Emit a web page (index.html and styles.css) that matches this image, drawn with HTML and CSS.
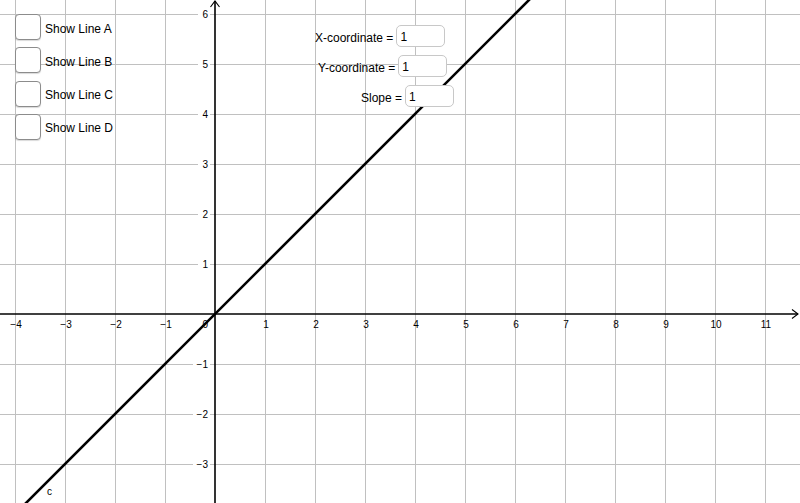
FILE: index.html
```html
<!DOCTYPE html>
<html>
<head>
<meta charset="utf-8">
<link rel="stylesheet" href="styles.css">
</head>
<body>
<div class="canvas">
  <svg class="graph" width="800" height="503" viewBox="0 0 800 503" xmlns="http://www.w3.org/2000/svg">
    <g class="grid">
      <line x1="15.5" y1="0" x2="15.5" y2="503"/>
      <line x1="65.5" y1="0" x2="65.5" y2="503"/>
      <line x1="115.5" y1="0" x2="115.5" y2="503"/>
      <line x1="165.5" y1="0" x2="165.5" y2="503"/>
      <line x1="265.5" y1="0" x2="265.5" y2="503"/>
      <line x1="315.5" y1="0" x2="315.5" y2="503"/>
      <line x1="365.5" y1="0" x2="365.5" y2="503"/>
      <line x1="415.5" y1="0" x2="415.5" y2="503"/>
      <line x1="465.5" y1="0" x2="465.5" y2="503"/>
      <line x1="515.5" y1="0" x2="515.5" y2="503"/>
      <line x1="565.5" y1="0" x2="565.5" y2="503"/>
      <line x1="615.5" y1="0" x2="615.5" y2="503"/>
      <line x1="665.5" y1="0" x2="665.5" y2="503"/>
      <line x1="715.5" y1="0" x2="715.5" y2="503"/>
      <line x1="765.5" y1="0" x2="765.5" y2="503"/>
      <line x1="0" y1="14.5" x2="800" y2="14.5"/>
      <line x1="0" y1="64.5" x2="800" y2="64.5"/>
      <line x1="0" y1="114.5" x2="800" y2="114.5"/>
      <line x1="0" y1="164.5" x2="800" y2="164.5"/>
      <line x1="0" y1="214.5" x2="800" y2="214.5"/>
      <line x1="0" y1="264.5" x2="800" y2="264.5"/>
      <line x1="0" y1="364.5" x2="800" y2="364.5"/>
      <line x1="0" y1="414.5" x2="800" y2="414.5"/>
      <line x1="0" y1="464.5" x2="800" y2="464.5"/>
    </g>
    <g class="labelbg">
      <rect x="198" y="8" width="12" height="13"/>
      <rect x="198" y="58" width="12" height="13"/>
      <rect x="198" y="108" width="12" height="13"/>
      <rect x="198" y="158" width="12" height="13"/>
      <rect x="198" y="208" width="12" height="13"/>
      <rect x="198" y="258" width="12" height="13"/>
      <rect x="193" y="358" width="17" height="13"/>
      <rect x="193" y="408" width="17" height="13"/>
      <rect x="193" y="458" width="17" height="13"/>
    </g>
    <g class="axes">
      <line x1="0" y1="314" x2="798" y2="314"/>
      <line x1="215" y1="1" x2="215" y2="503"/>
      <polyline points="792,309.5 798,314 792,318.5"/>
      <polyline points="210.5,7 215,1 219.5,7"/>
    </g>
    <line class="fn" x1="-4" y1="533" x2="537" y2="-8"/>
    <g class="ticks xt">
      <text x="16" y="328">−4</text>
      <text x="66" y="328">−3</text>
      <text x="116" y="328">−2</text>
      <text x="166" y="328">−1</text>
      <text x="266" y="328">1</text>
      <text x="316" y="328">2</text>
      <text x="366" y="328">3</text>
      <text x="416" y="328">4</text>
      <text x="466" y="328">5</text>
      <text x="516" y="328">6</text>
      <text x="566" y="328">7</text>
      <text x="616" y="328">8</text>
      <text x="666" y="328">9</text>
      <text x="716" y="328">10</text>
      <text x="766" y="328">11</text>
    </g>
    <g class="ticks yt">
      <text x="208" y="18">6</text>
      <text x="208" y="68">5</text>
      <text x="208" y="118">4</text>
      <text x="208" y="168">3</text>
      <text x="208" y="218">2</text>
      <text x="208" y="268">1</text>
      <text x="208" y="328">0</text>
      <text x="208" y="368">−1</text>
      <text x="208" y="418">−2</text>
      <text x="208" y="468">−3</text>
    </g>
    <text class="fnlabel" x="47" y="495">c</text>
  </svg>

  <div class="checks">
    <label class="check"><span class="box"></span><span class="text">Show Line A</span></label>
    <label class="check"><span class="box"></span><span class="text">Show Line B</span></label>
    <label class="check"><span class="box"></span><span class="text">Show Line C</span></label>
    <label class="check"><span class="box"></span><span class="text">Show Line D</span></label>
  </div>

  <div class="field field-x"><span class="flabel">X-coordinate =</span><span class="input">1</span></div>
  <div class="field field-y"><span class="flabel">Y-coordinate =</span><span class="input">1</span></div>
  <div class="field field-s"><span class="flabel">Slope =</span><span class="input">1</span></div>
</div>
</body>
</html>
```
FILE: styles.css
```css
html, body {
  margin: 0;
  padding: 0;
  background: #ffffff;
}
.canvas {
  position: relative;
  width: 800px;
  height: 503px;
  overflow: hidden;
  font-family: "Liberation Sans", Arial, sans-serif;
  color: #000;
}
.graph {
  display: block;
  position: absolute;
  left: 0;
  top: 0;
}
.grid line {
  stroke: #c0c0c0;
  stroke-width: 1;
  shape-rendering: crispEdges;
}
.labelbg rect {
  fill: #ffffff;
}
.axes line {
  stroke: #000;
  stroke-width: 1.6;
}
.axes polyline {
  fill: none;
  stroke: #000;
  stroke-width: 1.1;
}
.fn {
  stroke: #000;
  stroke-width: 2.6;
}
.ticks text {
  font-family: "Liberation Sans", Arial, sans-serif;
  font-size: 10px;
  fill: #000;
}
.xt text {
  text-anchor: middle;
}
.yt text {
  text-anchor: end;
}
.fnlabel {
  font-family: "Liberation Sans", Arial, sans-serif;
  font-size: 10px;
  fill: #000;
}
.checks {
  position: absolute;
  left: 15px;
  top: 14px;
  display: flex;
  flex-direction: column;
  gap: 7.3px;
}
.check {
  display: flex;
  align-items: center;
  gap: 4px;
  font-size: 12px;
  height: 26px;
}
.check .text {
  padding-top: 3px;
}
.box {
  width: 24px;
  height: 24px;
  border: 1px solid #8c8c8c;
  border-radius: 4px;
  background: #fff;
  box-shadow: 0 1px 1px rgba(0,0,0,0.15);
}
.field {
  position: absolute;
  display: flex;
  align-items: center;
  gap: 3px;
  font-size: 12px;
}
.flabel {
  padding-top: 3px;
}
.field-x { left: 315px; top: 25px; }
.field-y { left: 318px; top: 55px; }
.field-s { left: 361px; top: 85px; }
.input {
  box-sizing: border-box;
  width: 49px;
  height: 22px;
  border: 1px solid #c8c8c8;
  border-radius: 5px;
  background: #fff;
  padding-left: 3px;
  padding-top: 2px;
  display: flex;
  align-items: center;
}
```
